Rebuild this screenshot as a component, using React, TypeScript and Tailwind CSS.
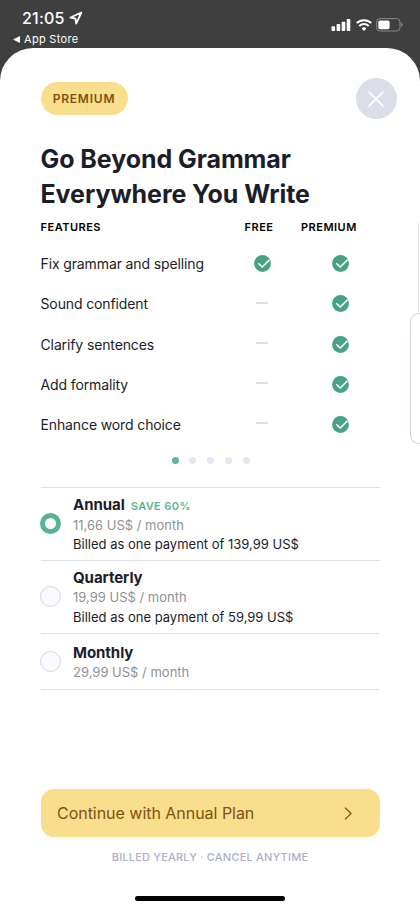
import { useState } from "react";

interface Feature {
  name: string;
  free: boolean;
}

interface Plan {
  id: string;
  name: string;
  price: string;
  badge?: string;
  billing?: string;
}

const features: Feature[] = [
  { name: "Fix grammar and spelling", free: true },
  { name: "Sound confident", free: false },
  { name: "Clarify sentences", free: false },
  { name: "Add formality", free: false },
  { name: "Enhance word choice", free: false },
];

const plans: Plan[] = [
  {
    id: "annual",
    name: "Annual",
    badge: "SAVE 60%",
    price: "11,66 US$ / month",
    billing: "Billed as one payment of 139,99 US$",
  },
  {
    id: "quarterly",
    name: "Quarterly",
    price: "19,99 US$ / month",
    billing: "Billed as one payment of 59,99 US$",
  },
  { id: "monthly", name: "Monthly", price: "29,99 US$ / month" },
];

const CheckIcon = () => (
  <svg width="17" height="17" viewBox="0 0 17 17" fill="none">
    <circle cx="8.5" cy="8.5" r="8.4" fill="#48a384" />
    <path d="M4.3 8.2 8.2 12 15.4 4.9" stroke="#fff" strokeWidth="1.5" />
  </svg>
);

const StatusBar = () => (
  <div className="flex h-[48px] justify-between text-white">
    <div className="pl-[13px] pt-[8px]">
      <div className="flex items-center gap-[4px] pl-[9px]">
        <span className="text-[16px] leading-[20px] font-medium tracking-[0.2px]">21:05</span>
        <svg width="14" height="14" viewBox="0 0 14 14" fill="none">
          <path
            d="M12.4 1.5 1.4 6.5l5 1.1.8 5z"
            stroke="#fff"
            strokeWidth="1.8"
            strokeLinejoin="round"
          />
        </svg>
      </div>
      <div className="mt-[4px] flex items-center gap-[4px]">
        <svg width="7" height="7" viewBox="0 0 7 7">
          <path d="M0 3.5 7 0v7z" fill="#fff" />
        </svg>
        <span className="text-[11px] leading-[14px] tracking-[0.3px]">App Store</span>
      </div>
    </div>
    <div className="mt-[18px] flex h-[14px] items-center gap-[4.5px] pr-[17px]">
      <svg width="20" height="12" viewBox="0 0 20 12" fill="#fff">
        <rect x="0.5" y="7.2" width="3.6" height="4.8" rx="0.8" />
        <rect x="5.6" y="5" width="3.6" height="7" rx="0.8" />
        <rect x="10.7" y="2.8" width="3.6" height="9.2" rx="0.8" />
        <rect x="15.7" y="0.1" width="3.6" height="11.9" rx="0.8" />
      </svg>
      <svg width="16" height="12" viewBox="0 0 16 12" fill="none" stroke="#fff">
        <path d="M0.7 4.1a10.6 10.6 0 0 1 14.6 0" strokeWidth="2" />
        <path d="M3.3 6.9a6.9 6.9 0 0 1 9.4 0" strokeWidth="2" />
        <path d="M8 11.9 5.6 9.4a3.6 3.6 0 0 1 4.8 0z" fill="#fff" stroke="none" />
      </svg>
      <svg width="27" height="14" viewBox="0 0 27 14" fill="none">
        <rect x="0.6" y="0.6" width="23.4" height="12.4" rx="3.4" stroke="#8a8a8a" />
        <rect x="2.3" y="2.4" width="11.3" height="8.8" rx="1.8" fill="#fff" />
        <path d="M25.2 4.8c2 .7 2 3.3 0 4z" fill="#8a8a8a" />
      </svg>
    </div>
  </div>
);

const App = () => {
  const [selected, setSelected] = useState("annual");

  return (
    <div className="h-[909px] w-[420px] overflow-hidden bg-[#3f3f3f] font-['Inter',sans-serif]">
      <StatusBar />
      <main className="relative flex h-[861px] flex-col rounded-t-[33px] bg-white px-[40.5px] text-[#1b1d29]">
        <div className="mt-[30px] -mr-[17px] flex h-[41px] items-center justify-between">
          <span className="flex h-[33px] w-[87px] items-center justify-center rounded-full bg-[#f9de8d] text-[12px] font-semibold tracking-[0.8px] text-[#7f5212]">
            PREMIUM
          </span>
          <button className="flex size-[41px] items-center justify-center rounded-full bg-[#dbdde9]">
            <svg width="16" height="16" viewBox="0 0 16 16" stroke="#fff" strokeWidth="1.7" strokeLinecap="round">
              <path d="M1 1l14 14M15 1 1 15" />
            </svg>
          </button>
        </div>

        <h1 className="mt-[23px] text-[25px] leading-[34.5px] font-bold tracking-[-0.07px]">
          Go Beyond Grammar
          <br />
          Everywhere You Write
        </h1>

        <div className="mt-[7px] flex h-[18px] items-center text-[11px] font-semibold tracking-[0.5px] text-black">
          <span className="w-[204px]">FEATURES</span>
          <span className="w-[56.5px]">FREE</span>
          <span>PREMIUM</span>
        </div>
        <ul className="mt-[7.6px]">
          {features.map((feature) => (
            <li key={feature.name} className="flex h-[40.2px] items-center text-[14px] tracking-[-0.12px]">
              <span className="w-[212.5px]">{feature.name}</span>
              <span className="flex w-[18px] justify-center">
                {feature.free ? <CheckIcon /> : <span className="mb-[2px] h-[2px] w-[12px] bg-[#e0e0e2]" />}
              </span>
              <span className="ml-[60.5px]">
                <CheckIcon />
              </span>
            </li>
          ))}
        </ul>

        <div className="mt-[12.2px] flex justify-center gap-[10.8px] pl-[1.4px]">
          {[0, 1, 2, 3, 4].map((dot) => (
            <span key={dot} className={`size-[7px] rounded-full ${dot === 0 ? "bg-[#56b990]" : "bg-[#e6e6f3]"}`} />
          ))}
        </div>

        <div className="mt-[23px] border-t border-[#dfe0ea]">
          {plans.map((p) => (
            <button
              key={p.id}
              onClick={() => setSelected(p.id)}
              className={`flex w-full items-center border-b border-[#dfe0ea] text-left ${p.billing ? "h-[73px]" : "h-[56px]"}`}
            >
              {p.id === selected ? (
                <span className="-ml-[0.5px] size-[21px] rounded-full border-[5px] border-[#56b58e] bg-white" />
              ) : (
                <span className="-ml-[0.5px] size-[21px] rounded-full border border-[#d3d4e2] bg-[#f9faff]" />
              )}
              <span className="ml-[12px] flex flex-col pt-[2.5px]">
                <span className="flex items-center gap-[6px] text-[15px] leading-[20px] font-bold tracking-[-0.05px]">
                  {p.name}
                  {p.badge && (
                    <span className="pt-[1px] text-[11px] font-semibold tracking-[0.4px] text-[#56b990]">{p.badge}</span>
                  )}
                </span>
                <span className="text-[13px] leading-[19.5px] text-[#919191]">{p.price}</span>
                {p.billing && <span className="text-[13px] leading-[19.5px]">{p.billing}</span>}
              </span>
            </button>
          ))}
        </div>

        <button className="mt-auto flex h-[48px] items-center justify-between rounded-[13px] bg-[#f9de8d] pl-[16.5px] pr-[27.5px] text-[16px] tracking-[-0.03px] text-[#7f5212]">
          Continue with Annual Plan
          <svg width="8" height="13" viewBox="0 0 8 13" fill="none" stroke="#7f5212" strokeWidth="1.3">
            <path d="M1 0.6 7 6.5 1 12.4" />
          </svg>
        </button>
        <p className="mt-[12px] text-center text-[11px] leading-[17px] font-medium tracking-[0.2px] text-[#acb0ca]">
          BILLED YEARLY · CANCEL ANYTIME
        </p>
        <div className="mt-[30px] mb-[8px] h-[5px] w-[150px] self-center rounded-full bg-black" />

        {/* edge of the next carousel slide */}
        <div className="absolute top-[174px] right-0 h-[92px] w-[2px] rounded-tl-[2px] border-l border-[#e2e3ef]" />
        <div className="absolute top-[265px] right-0 h-[131px] w-[10px] rounded-l-[9px] border border-r-0 border-[#d0d1de] bg-white" />
      </main>
    </div>
  );
};

export default App;
